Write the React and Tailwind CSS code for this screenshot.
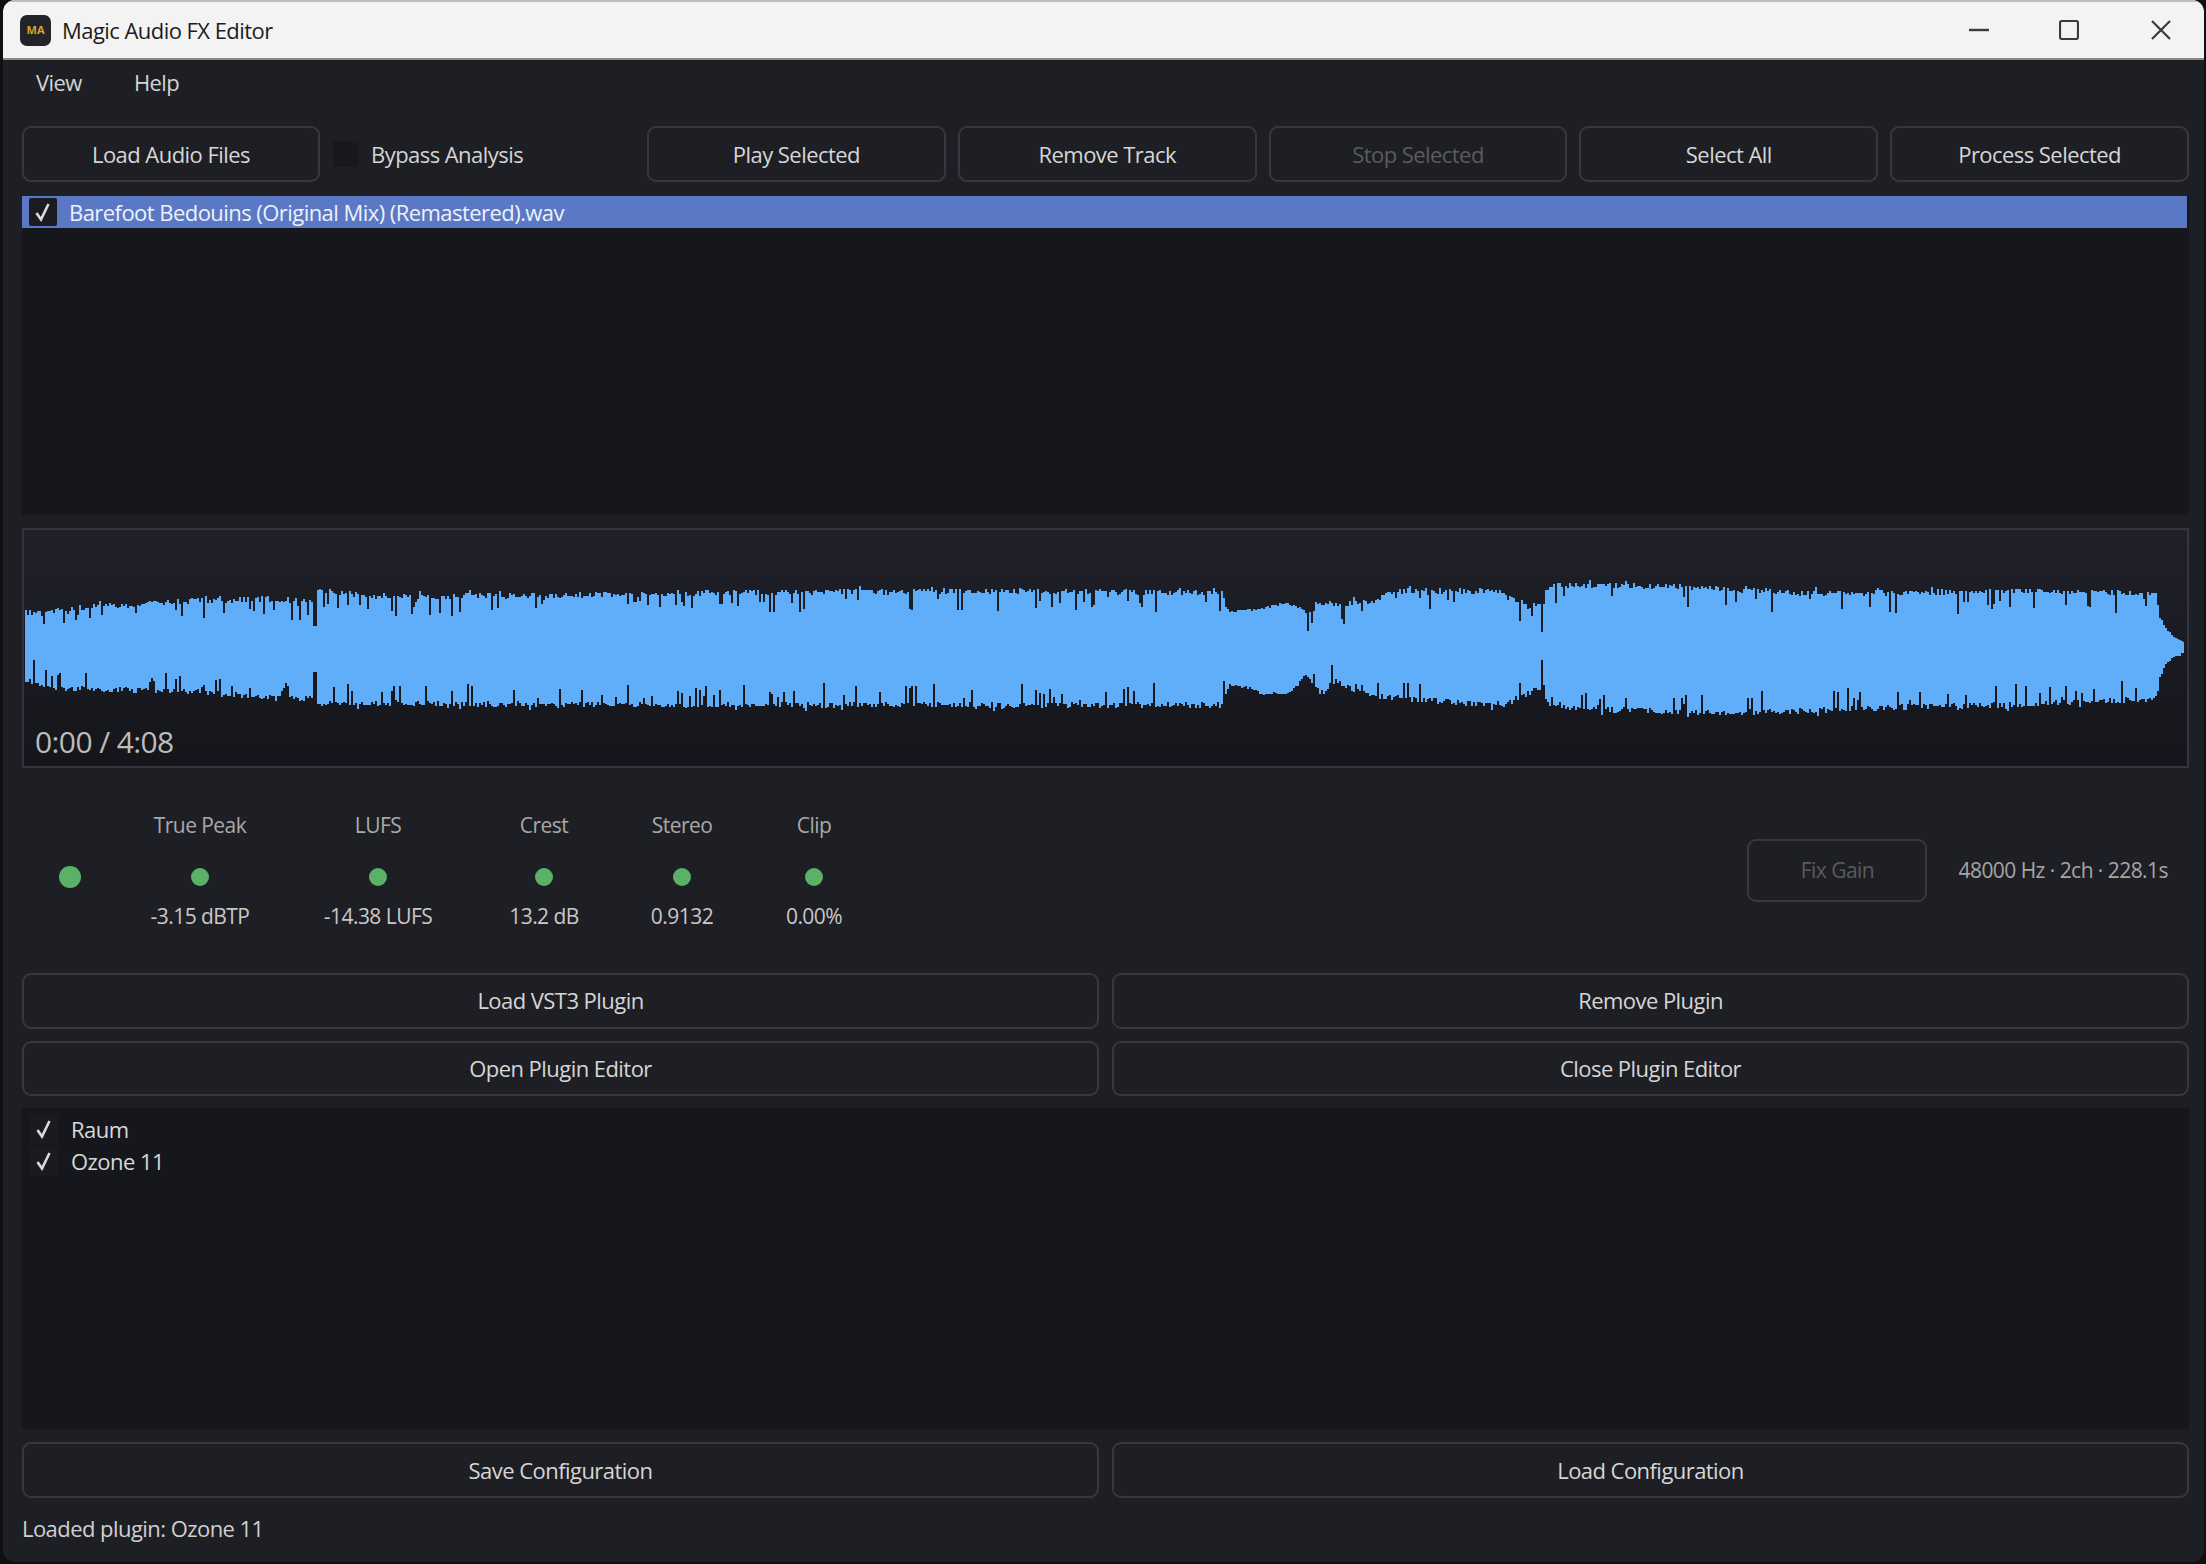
const FONT = "font-['Open_Sans','Noto_Sans',sans-serif]";

function rng(seed) {
  let s = seed;
  return () => {
    s = (s * 1664525 + 1013904223) >>> 0;
    return s / 4294967296;
  };
}

const TOP = [[25,612],[100,605],[200,600],[260,598],[312,600],[318,590],[400,596],[700,592],[1000,590],[1222,592],[1228,612],[1260,610],[1285,603],[1305,612],[1320,604],[1377,600],[1385,590],[1500,590],[1512,600],[1540,604],[1548,584],[1700,586],[1800,592],[1900,592],[2000,590],[2156,592],[2158,616],[2165,628],[2172,636],[2180,642],[2184,644]];
const BOT = [[25,680],[50,690],[100,690],[200,693],[260,698],[312,700],[318,704],[700,706],[1000,706],[1222,706],[1228,684],[1250,688],[1262,694],[1290,692],[1305,674],[1320,693],[1335,682],[1355,692],[1377,697],[1500,707],[1520,698],[1540,688],[1548,708],[1700,714],[1800,712],[1900,708],[2000,706],[2156,700],[2158,678],[2165,664],[2172,658],[2180,654],[2184,652]];

function lerp(points, x) {
  for (let i = 0; i < points.length - 1; i++) {
    const [x0, y0] = points[i];
    const [x1, y1] = points[i + 1];
    if (x >= x0 && x <= x1) return y0 + ((y1 - y0) * (x - x0)) / (x1 - x0);
  }
  return points[points.length - 1][1];
}

function waveformPath() {
  const r = rng(12345);
  const ox = 24;
  const oy = 530;
  let up = "";
  const down = [];
  for (let x = 25; x < 2184; x += 2) {
    const quiet = (x > 1228 && x < 1305) || x > 2156;
    let t = lerp(TOP, x) + r() * (quiet ? 3 : 6) - 2;
    let b = lerp(BOT, x) - r() * (quiet ? 3 : 6) + 2;
    if (!quiet) {
      const d1 = r();
      if (d1 > 0.86) t += 6 + r() * 14;
      else if (d1 < 0.04) t -= 3;
      const d2 = r();
      if (d2 > 0.86) b -= 6 + r() * 14;
      else if (d2 < 0.04) b += 3;
    }
    if (x >= 1540 && x < 1543) {
      t = 632;
      b = 660;
    }
    if (x >= 312 && x < 316) {
      t = 626;
      b = 672;
    }
    up += `${up ? "L" : "M"}${x - ox} ${t.toFixed(0) - oy}L${x + 2 - ox} ${t.toFixed(0) - oy}`;
    down.unshift(`L${x + 2 - ox} ${b.toFixed(0) - oy}L${x - ox} ${b.toFixed(0) - oy}`);
  }
  return up + down.join("") + "Z";
}

const WAVE = waveformPath();

function Btn({ children, disabled, className = "" }) {
  return (
    <button
      className={`flex items-center justify-center rounded-[9px] border-2 border-[#37383f] bg-[#1e1f24] ${
        disabled ? "text-[#5a5b5f]" : "text-[#d6d6d6]"
      } ${className}`}
    >
      {children}
    </button>
  );
}

function Check({ boxed }) {
  return (
    <span className={`flex h-[28px] w-[28px] shrink-0 items-center justify-center rounded-[2px] ${boxed ? "bg-[#1b1c22]" : "bg-[#1a1b20]"}`}>
      <svg width="18" height="20" viewBox="0 0 18 20" fill="none">
        <path d="M2.5 11 L7 17.5 L14.5 2" stroke="#dcdcdc" strokeWidth="2.6" />
      </svg>
    </span>
  );
}

function Meter({ label, value, width }) {
  return (
    <div className={`flex shrink-0 flex-col items-center ${width}`}>
      <div className="flex h-[36px] items-center text-[#a8a8a8]">{label}</div>
      <div className="mt-[24px] h-[18px] w-[18px] rounded-full bg-[#5bb168]" />
      <div className="mt-[13px] flex h-[36px] items-center whitespace-nowrap text-[#c8c8c8]">{value}</div>
    </div>
  );
}

export default function App() {
  return (
    <div className={`h-[1564px] w-[2206px] overflow-hidden bg-[#101012] ${FONT} text-[22px] tracking-[-0.55px]`}>
      <div className="ml-[3px] flex h-[1562px] w-[2201px] flex-col overflow-hidden rounded-[12px] bg-[#1e1f24]">
        <div className="flex h-[60px] shrink-0 items-center border-b-2 border-t-2 border-b-[#8a8a8a] border-t-[#bdbdbd] bg-[#f3f3f3] pl-[17px] text-[#1c1c1c]">
          <div className="flex h-[31px] w-[31px] items-center justify-center rounded-[7px] bg-[#23232a] text-[11px] font-bold tracking-normal text-[#d9a52b]">
            MA
          </div>
          <span className="ml-[11px]">Magic Audio FX Editor</span>
          <div className="ml-auto flex items-center text-[#333]">
            <svg width="20" height="20" viewBox="0 0 20 20" className="mr-[70px]" fill="none">
              <path d="M0 10H20" stroke="#3a3a3a" strokeWidth="2.4" />
            </svg>
            <svg width="20" height="20" viewBox="0 0 20 20" className="mr-[72px]" fill="none">
              <rect x="1" y="1" width="18" height="18" rx="2" stroke="#3a3a3a" strokeWidth="2.2" />
            </svg>
            <svg width="20" height="20" viewBox="0 0 20 20" className="mr-[33px]" fill="none">
              <path d="M1 1L19 19M19 1L1 19" stroke="#3a3a3a" strokeWidth="2.2" />
            </svg>
          </div>
        </div>

        <div className="flex h-[45px] shrink-0 items-center pl-[33px] text-[#d4d4d4]">
          <span>View</span>
          <span className="ml-[52px]">Help</span>
        </div>

        <div className="flex min-h-0 flex-1 flex-col px-[19px] pr-[15px] pt-[21px]">
          <div className="flex h-[56px] shrink-0 items-stretch">
            <Btn className="w-[298px] shrink-0">Load Audio Files</Btn>
            <div className="ml-[13px] flex items-center text-[#d4d4d4]">
              <span className="h-[26px] w-[26px] bg-[#18191d]" />
              <span className="ml-[12px] whitespace-nowrap">Bypass Analysis</span>
            </div>
            <div className="ml-auto flex w-[1542px] gap-[12px]">
              <Btn className="flex-1">Play Selected</Btn>
              <Btn className="flex-1">Remove Track</Btn>
              <Btn className="flex-1" disabled>Stop Selected</Btn>
              <Btn className="flex-1">Select All</Btn>
              <Btn className="flex-1">Process Selected</Btn>
            </div>
          </div>

          <div className="mt-[14px] h-[319px] shrink-0 bg-[#16171c]">
            <div className="mr-[2px] flex h-[32px] items-center bg-[#5a78c4] pl-[7px] text-[#eef1fa]">
              <Check boxed />
              <span className="ml-[12px]">Barefoot Bedouins (Original Mix) (Remastered).wav</span>
            </div>
          </div>

          <div className="relative mt-[13px] h-[240px] shrink-0 border-2 border-[#33343d] bg-gradient-to-b from-[#1f2029] to-[#15161b]">
            <svg width="2160" height="200" viewBox="0 0 2160 200" className="block">
              <path d={WAVE} fill="#60adfa" />
            </svg>
            <span className="absolute bottom-[4px] left-[11px] text-[30px] leading-[40px] tracking-[-0.6px] text-[#bcbcbc]">0:00 / 4:08</span>
          </div>

          <div className="flex h-[205px] shrink-0 items-start text-[21px]">
            <div className="flex w-[96px] shrink-0 justify-center pt-[98px]">
              <div className="h-[22px] w-[22px] rounded-full bg-[#5bb168]" />
            </div>
            <div className="flex pt-[40px]">
              <Meter label="True Peak" value="-3.15 dBTP" width="w-[164px]" />
              <Meter label="LUFS" value="-14.38 LUFS" width="w-[192px]" />
              <Meter label="Crest" value="13.2 dB" width="w-[140px]" />
              <Meter label="Stereo" value="0.9132" width="w-[136px]" />
              <Meter label="Clip" value="0.00%" width="w-[128px]" />
            </div>
            <div className="ml-auto mr-[21px] flex items-center pt-[71px]">
              <Btn disabled className="h-[63px] w-[180px]">Fix Gain</Btn>
              <span className="ml-[31px] whitespace-nowrap text-[#a5a5a5]">48000 Hz · 2ch · 228.1s</span>
            </div>
          </div>

          <div className="grid h-[123px] shrink-0 grid-cols-2 grid-rows-2 gap-x-[13px] gap-y-[12px]">
            <Btn>Load VST3 Plugin</Btn>
            <Btn>Remove Plugin</Btn>
            <Btn>Open Plugin Editor</Btn>
            <Btn>Close Plugin Editor</Btn>
          </div>

          <div className="mt-[12px] h-[321px] shrink-0 bg-[#16171c] pl-[8px] pt-[5px] text-[#d8d8d8]">
            <div className="flex h-[32px] items-center">
              <Check />
              <span className="ml-[13px]">Raum</span>
            </div>
            <div className="flex h-[32px] items-center">
              <Check />
              <span className="ml-[13px]">Ozone 11</span>
            </div>
          </div>

          <div className="mt-[13px] grid h-[56px] shrink-0 grid-cols-2 gap-x-[13px]">
            <Btn>Save Configuration</Btn>
            <Btn>Load Configuration</Btn>
          </div>

          <div className="flex h-[60px] items-center text-[#d0d0d0]">Loaded plugin: Ozone 11</div>
        </div>
      </div>
    </div>
  );
}
